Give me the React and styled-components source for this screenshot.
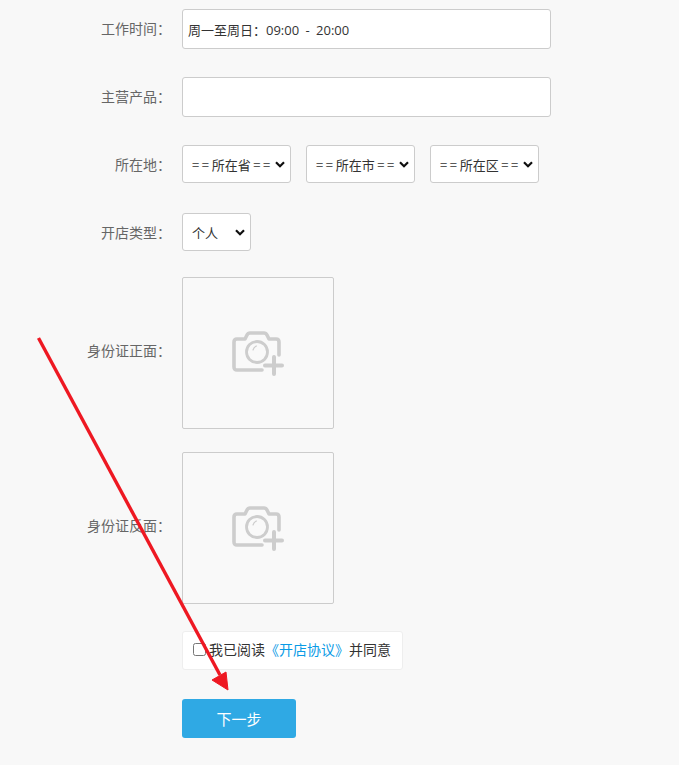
import React from "react";
import styled, { createGlobalStyle } from "styled-components";

const GlobalStyle = createGlobalStyle`
	html, body {
		margin: 0;
		padding: 0;
		background: #f8f8f8;
	}
	body {
		font-family: "Noto Sans CJK SC", "Open Sans", sans-serif;
		font-size: 14px;
		color: #333;
	}
`;

const Page = styled.div`
	position: relative;
	width: 679px;
	height: 765px;
	overflow: hidden;
	padding-top: 9px;
	box-sizing: border-box;
`;

const Row = styled.div`
	display: flex;
	align-items: center;
	margin-bottom: ${(p) => p.$gap}px;
`;

const Label = styled.label`
	width: 171px;
	margin-right: 11px;
	margin-bottom: ${(p) => p.$lift}px;
	flex: none;
	text-align: right;
	font-size: 14px;
	line-height: 20px;
	color: #666;
`;

const TextInput = styled.input`
	width: 369px;
	height: 40px;
	box-sizing: border-box;
	padding: 0 5px;
	background: #fff;
	border: 1px solid #ccc;
	border-radius: 3px;
	outline: none;
	font-family: "Open Sans", "Noto Sans CJK SC", sans-serif;
	font-size: 13px;
	word-spacing: 3px;
	color: #333;
`;

const SelectGroup = styled.div`
	display: flex;
	gap: 15px;
`;

const Select = styled.select`
	appearance: none;
	width: ${(p) => p.$width}px;
	height: 38px;
	box-sizing: border-box;
	padding: 0 9px;
	background: #fff url("data:image/svg+xml,%3Csvg xmlns='http://www.w3.org/2000/svg' width='10' height='7' viewBox='0 0 10 7'%3E%3Cpath d='M1 1.200l4 4 4-4' fill='none' stroke='%23111' stroke-width='2.200'/%3E%3C/svg%3E") no-repeat right 5px center;
	border: 1px solid #ccc;
	border-radius: 3px;
	outline: none;
	font-family: inherit;
	font-size: 13px;
	color: #333;
`;

const Upload = styled.div`
	width: 152px;
	height: 152px;
	box-sizing: border-box;
	padding-top: 1px;
	display: flex;
	align-items: center;
	justify-content: center;
	background: #f9f9f9;
	border: 1px solid #ccc;
	border-radius: 2px;
`;

const Agreement = styled.div`
	display: flex;
	align-items: center;
	width: 221px;
	height: 39px;
	box-sizing: border-box;
	margin-left: 182px;
	margin-bottom: 29px;
	padding-left: 10px;
	background: #fff;
	border: 1px solid #eee;
	border-radius: 3px;
	font-size: 14px;
	color: #333;
	white-space: nowrap;
`;

const Check = styled.input`
	width: 13px;
	height: 13px;
	margin: 0 3px 2px 0;
`;

const AgreementText = styled.span`
	margin-bottom: 3px;
`;

const AgreementLink = styled.a`
	color: #0a9be6;
	text-decoration: none;
`;

const NextButton = styled.button`
	display: block;
	width: 114px;
	height: 39px;
	margin-left: 182px;
	background: #2fa9e4;
	border: 0;
	border-radius: 3px;
	font-family: inherit;
	font-size: 15px;
	color: #fff;
`;

const ArrowOverlay = styled.svg`
	position: absolute;
	left: 0;
	top: 0;
	pointer-events: none;
`;

const CameraPlus = () => (
	<svg width="52" height="45" viewBox="0 0 52 45" fill="none" stroke="#cdcdcd" strokeWidth="3.600" strokeLinecap="round" strokeLinejoin="round">
		<path d="M30 39H5q-3 0-3-3V11q0-3 3-3h8l2-4q1-2 3-2h14q2 0 3 2l2 4h7q3 0 3 3v13" />
		<circle cx="25" cy="21" r="10.500" strokeWidth="2.800" />
		<path d="M21 19q.8-3 3.500-4" strokeWidth="1.200" />
		<path d="M42 26v17M33 34.500h17" strokeWidth="4" />
	</svg>
);

const UploadRow = ({ label, gap }) => (
	<Row $gap={gap}>
		<Label $lift={7}>{label}：</Label>
		<Upload>
			<CameraPlus />
		</Upload>
	</Row>
);

export default function App() {
	return (
		<Page>
			<GlobalStyle />
			<Row $gap={28}>
				<Label $lift={3}>工作时间：</Label>
				<TextInput defaultValue="周一至周日：09:00 - 20:00" />
			</Row>
			<Row $gap={28}>
				<Label $lift={3}>主营产品：</Label>
				<TextInput />
			</Row>
			<Row $gap={30}>
				<Label $lift={1}>所在地：</Label>
				<SelectGroup>
					<Select $width={109}><option>{"=\u2009=\u2009所在省\u2009=\u2009="}</option></Select>
					<Select $width={109}><option>{"=\u2009=\u2009所在市\u2009=\u2009="}</option></Select>
					<Select $width={109}><option>{"=\u2009=\u2009所在区\u2009=\u2009="}</option></Select>
				</SelectGroup>
			</Row>
			<Row $gap={26}>
				<Label $lift={1}>开店类型：</Label>
				<Select $width={69}><option>个人</option></Select>
			</Row>
			<UploadRow label="身份证正面" gap={23} />
			<UploadRow label="身份证反面" gap={27} />
			<Agreement>
				<Check type="checkbox" />
				<AgreementText>
					我已阅读<AgreementLink href="#">《开店协议》</AgreementLink>并同意
				</AgreementText>
			</Agreement>
			<NextButton>下一步</NextButton>
			<ArrowOverlay width="679" height="765" viewBox="0 0 679 765">
				<path d="M38.500 338L220 675" stroke="#ee1822" strokeWidth="3.400" fill="none" />
				<path d="M212 680L226 672L228 690Z" fill="#ee1822" stroke="#ee1822" strokeWidth="1" />
			</ArrowOverlay>
		</Page>
	);
}
